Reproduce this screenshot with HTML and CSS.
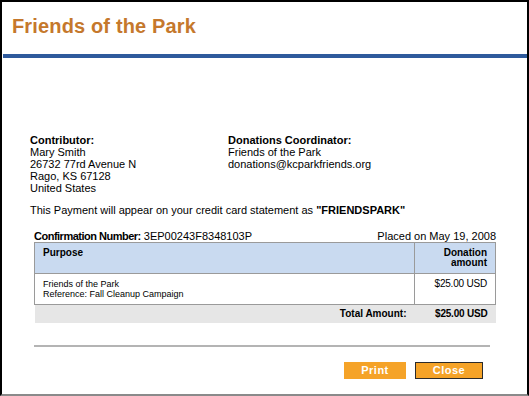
FILE: index.html
```html
<!DOCTYPE html>
<html>
<head>
<meta charset="utf-8">
<link rel="stylesheet" href="styles.css">
</head>
<body>
<div class="window">
  <h1 class="title">Friends of the Park</h1>
  <div class="bar"></div>
  <div class="content">
    <div class="parties">
      <div class="party party-left">
        <div class="label">Contributor:</div>
        <div>Mary Smith</div>
        <div>26732 77rd Avenue N</div>
        <div>Rago, KS 67128</div>
        <div>United States</div>
      </div>
      <div class="party">
        <div class="label">Donations Coordinator:</div>
        <div>Friends of the Park</div>
        <div>donations@kcparkfriends.org</div>
      </div>
    </div>
    <p class="statement">This Payment will appear on your credit card statement as <b>"FRIENDSPARK"</b></p>
    <div class="order">
      <div class="conf-row">
        <span><b class="conf-label">Confirmation Number:</b> 3EP00243F8348103P</span>
        <span>Placed on May 19, 2008</span>
      </div>
      <table class="items">
        <thead>
          <tr><th class="col-purpose">Purpose</th><th class="col-amount">Donation<br>amount</th></tr>
        </thead>
        <tbody>
          <tr><td class="col-purpose">Friends of the Park<br>Reference: Fall Cleanup Campaign</td><td class="col-amount money">$25.00 USD</td></tr>
        </tbody>
        <tfoot>
          <tr><td class="total-label">Total Amount:</td><td class="total-value money">$25.00 USD</td></tr>
        </tfoot>
      </table>
    </div>
    <div class="rule"></div>
    <div class="actions">
      <button class="btn">Print</button>
      <button class="btn btn-default">Close</button>
    </div>
  </div>
</div>
</body>
</html>
```
FILE: styles.css
```css
html, body {
  margin: 0;
  padding: 0;
  background: #fff;
}
body {
  font-family: "Liberation Sans", Arial, sans-serif;
  font-size: 11px;
  color: #000;
}
.window {
  box-sizing: border-box;
  width: 529px;
  height: 396px;
  border-top: 2px solid #000;
  border-left: 2px solid #000;
  border-right: 2px solid #000;
  border-bottom: 2px solid #8a8a8a;
  overflow: hidden;
}
.title {
  margin: 12px 0 0 10px;
  font-size: 20px;
  line-height: 24px;
  font-weight: bold;
  color: #c5782c;
  letter-spacing: 0.15px;
}
.bar {
  margin: 16px 0 0 1px;
  height: 4px;
  background: #2e5a9c;
}
.content {
  padding: 76px 0 0 28px;
}
.parties {
  display: flex;
  line-height: 12px;
}
.party-left {
  width: 198px;
}
.label {
  font-weight: bold;
}
.statement {
  margin: 10px 0 0 0;
  line-height: 12px;
}
.order {
  margin: 14px 0 0 4px;
  width: 462px;
}
.conf-row {
  display: flex;
  justify-content: space-between;
  line-height: 12px;
}
.conf-label {
  letter-spacing: -0.5px;
}
.items {
  width: 462px;
  border-collapse: collapse;
  font-size: 9px;
  line-height: 10px;
}
.items th {
  background: #c9daf0;
  font-size: 10px;
  font-weight: bold;
  text-align: left;
  vertical-align: top;
  height: 31px;
  box-sizing: border-box;
  padding: 5px 8px 0 8px;
  border: 1px solid #9a9a9a;
  line-height: 10px;
}
.items td {
  vertical-align: top;
  height: 31px;
  box-sizing: border-box;
  padding: 5px 8px 0 8px;
  border: 1px solid #9a9a9a;
}
.items .col-amount {
  width: 81px;
  text-align: right;
}
.items .money {
  font-family: "Liberation Sans Narrow", "Liberation Sans", Arial, sans-serif;
  font-size: 10px;
  letter-spacing: -0.2px;
}
.items tfoot td {
  background: #e6e6e6;
  border: none;
  height: 18px;
  padding: 4px 8px 0 8px;
  font-weight: bold;
  font-size: 10px;
  text-align: right;
}
.rule {
  margin: 22px 0 0 4px;
  width: 456px;
  height: 2px;
  background: #b4b4b4;
}
.actions {
  display: flex;
  justify-content: flex-end;
  gap: 9px;
  width: 453px;
  margin-top: 15px;
}
.btn {
  box-sizing: border-box;
  height: 17px;
  width: 62px;
  padding: 0;
  border: 1px solid #f5a328;
  background: #f5a328;
  color: #fff;
  font-family: "Liberation Sans", Arial, sans-serif;
  font-size: 11px;
  font-weight: bold;
  letter-spacing: 0.5px;
  line-height: 15px;
}
.btn-default {
  width: 68px;
  border-color: #2b2b2b;
}
```
